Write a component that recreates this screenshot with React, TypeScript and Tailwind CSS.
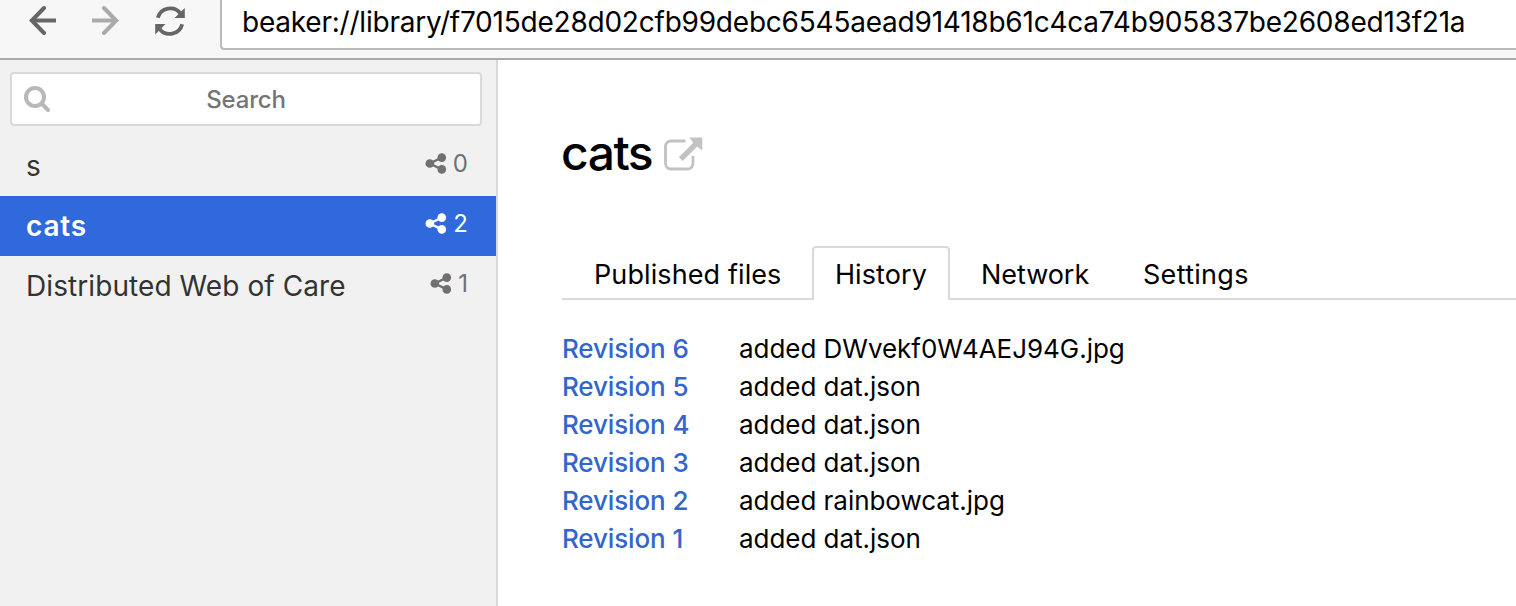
import React from 'react';

const sites = [
  { name: 's', peers: 0, nameClass: 'tracking-[0.2px]' },
  { name: 'cats', peers: 2, active: true, nameClass: 'tracking-[0.8px]' },
  { name: 'Distributed Web of Care', peers: 1, nameClass: 'tracking-[0.08px]' },
];

const revisions = [
  { id: 6, change: 'added DWvekf0W4AEJ94G.jpg' },
  { id: 5, change: 'added dat.json' },
  { id: 4, change: 'added dat.json' },
  { id: 3, change: 'added dat.json' },
  { id: 2, change: 'added rainbowcat.jpg' },
  { id: 1, change: 'added dat.json' },
];

function ShareIcon() {
  return (
    <svg className="h-[22px] w-[22px] shrink-0" viewBox="0 0 22 22" fill="currentColor">
      <path d="M4.6 10.500 16.800 4.600M4.600 10.500l12.200 5.900" stroke="currentColor" strokeWidth="2.4" />
      <circle cx="4.800" cy="10.500" r="4.300" />
      <circle cx="16.800" cy="4.600" r="4.300" />
      <circle cx="16.800" cy="16.400" r="4.300" />
    </svg>
  );
}

function Toolbar() {
  return (
    <header className="flex h-[60px] shrink-0 items-start overflow-hidden border-b-2 border-[#aaaaaa] bg-[#f7f7f7]">
      <div className="flex w-[220px] shrink-0 pl-[28px]">
        <svg className="mt-[5px] h-[30px] w-[30px]" viewBox="0 0 30 30" fill="none" stroke="#666666" strokeWidth="4">
          <path d="M28 15.5H4" />
          <path d="M16 3 3.8 15.5 16 28" strokeLinecap="round" />
        </svg>
        <svg className="ml-[32px] mt-[5px] h-[30px] w-[30px]" viewBox="0 0 30 30" fill="none" stroke="#aaaaaa" strokeWidth="4">
          <path d="M2 15.5h24" />
          <path d="m14 3 12.2 12.5L14 28" strokeLinecap="round" />
        </svg>
        <svg className="ml-[35px] mt-[5px] h-[32px] w-[32px]" viewBox="0 0 32 32">
          <path d="M2.8 12.8A12.9 12.9 0 0 1 25.5 8.5M27.2 19.2A12.9 12.9 0 0 1 4.5 23.8" fill="none" stroke="#666666" strokeWidth="3.8" />
          <path d="M29.8 3v10H19.5zM.2 29.5V19h10.3z" fill="#666666" />
        </svg>
      </div>
      <div className="-mt-1 flex h-[54px] flex-1 items-center rounded-bl border-2 border-r-0 border-[#bbbbbb] bg-white pb-0.5 pl-5 text-[28px] tracking-[-0.22px] text-black">
        <span className="whitespace-nowrap">beaker://library/f7015de28d02cfb99debc6545aead91418b61c4ca74b905837be2608ed13f21a</span>
      </div>
    </header>
  );
}

function Sidebar() {
  return (
    <aside className="w-[498px] shrink-0 border-r-2 border-[#d9d9d9] bg-[#f1f1f1] pt-3">
      <div className="mb-2.5 ml-2.5 flex h-[54px] w-[472px] items-center rounded border-2 border-[#d9d9d9] bg-white">
        <svg className="ml-3 h-[26px] w-[26px]" viewBox="0 0 26 26" fill="none" stroke="#b8b8b8" strokeWidth="4">
          <circle cx="11" cy="11" r="9" />
          <path d="m17.5 17.5 6.5 6.5" strokeLinecap="round" />
        </svg>
        <span className="-ml-[38px] flex-1 pt-0.5 text-center text-[24px] font-[450] tracking-[-0.2px] text-[#757575]">Search</span>
      </div>
      {sites.map((site) => (
        <div
          key={site.name}
          className={`flex h-[60px] items-center justify-between pl-[26px] pr-7 ${
            site.active ? 'bg-[#2f69db] font-semibold text-white' : 'text-[#333333]'
          }`}
        >
          <span className={`text-[28px] ${site.nameClass}`}>{site.name}</span>
          <span className={`mb-[5px] flex items-center gap-1.5 text-[24px] font-normal ${site.active ? 'text-white' : 'text-[#707070]'}`}>
            <ShareIcon />
            <span>{site.peers}</span>
          </span>
        </div>
      ))}
    </aside>
  );
}

function Tabs() {
  return (
    <nav className="flex h-[54px] text-[27px] tracking-[0.1px] text-black">
      <div className="flex w-[250px] items-center border-b-2 border-[#d9d9d9] pl-8 pt-1.5">
        <span className="whitespace-nowrap">Published files</span>
      </div>
      <div className="flex w-[138px] items-center justify-center rounded-t border-x-2 border-t-2 border-[#d9d9d9] pt-0.5">
        <span>History</span>
      </div>
      <div className="flex flex-1 items-center border-b-2 border-[#d9d9d9] pl-[31px] pt-1.5">
        <span className="w-[162px] tracking-[-0.05px]">Network</span>
        <span className="tracking-[0.3px]">Settings</span>
      </div>
    </nav>
  );
}

export default function App() {
  return (
    <div className="flex h-[606px] w-[1516px] flex-col overflow-hidden bg-white font-['Inter','Liberation_Sans',sans-serif]">
      <Toolbar />
      <div className="flex min-h-0 flex-1">
        <Sidebar />
        <main className="flex-1 pl-16 pt-[64px]">
          <div className="-ml-px mb-[62px] flex h-[60px] items-center">
            <h1 className="-mt-0.5 text-[48px] font-medium leading-[60px] tracking-[-1.5px] text-black">cats</h1>
            <svg className="ml-3 h-[34px] w-[39px]" viewBox="0 0 39 34">
              <path d="M21.5 4H7a5.5 5.5 0 0 0-5.5 5.5v17A5.5 5.5 0 0 0 7 32h16.5a5.5 5.5 0 0 0 5.5-5.5V19" fill="none" stroke="#c2c2c2" strokeWidth="2.8" />
              <path d="M25.5.5h11.5a1.3 1.3 0 0 1 1.3 1.3V13.5L33.2 9.6 18.7 24.1 14.8 20.2 29.3 5.7z" fill="#c2c2c2" />
            </svg>
          </div>
          <Tabs />
          <ul className="pt-[30px] text-[26px] leading-[38px]">
            {revisions.map((rev) => (
              <li key={rev.id} className="flex">
                <a className="w-[177px] font-[450] tracking-[-0.13px] text-[#3366cc]">Revision {rev.id}</a>
                <span className="tracking-[-0.04px] text-black">{rev.change}</span>
              </li>
            ))}
          </ul>
        </main>
      </div>
    </div>
  );
}
